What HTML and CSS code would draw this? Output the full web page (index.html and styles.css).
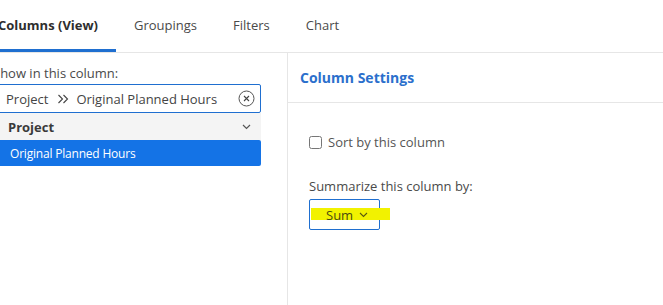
FILE: index.html
```html
<!DOCTYPE html>
<html lang="en">
<head>
  <meta charset="UTF-8">
  <title>Column Settings</title>
  <link rel="stylesheet" href="styles.css">
</head>
<body>
  <div class="page">
    <nav class="tabs">
      <div class="tab active">Columns (View)</div>
      <div class="tab">Groupings</div>
      <div class="tab">Filters</div>
      <div class="tab">Chart</div>
    </nav>

    <main class="content">
      <section class="left-panel">
        <div class="field-label">Show in this column:</div>
        <div class="picker">
          <span>Project</span>
          <svg class="sep" width="12" height="10" viewBox="0 0 12 10">
            <path d="M1.5 1 L5.5 5 L1.5 9 M6.5 1 L10.5 5 L6.5 9" fill="none" stroke="#444" stroke-width="1.1"/>
          </svg>
          <span>Original Planned Hours</span>
          <svg class="clear" width="17" height="17" viewBox="0 0 17 17">
            <circle cx="8.5" cy="8.5" r="7.5" fill="none" stroke="#555" stroke-width="1"/>
            <path d="M6 6 L11 11 M11 6 L6 11" stroke="#444" stroke-width="1.1"/>
          </svg>
        </div>
        <div class="group-row">
          <span>Project</span>
          <svg width="9" height="6" viewBox="0 0 9 6">
            <path d="M1 1 L4.5 4.5 L8 1" fill="none" stroke="#555" stroke-width="1.2"/>
          </svg>
        </div>
        <div class="option-row">Original Planned Hours</div>
      </section>

      <section class="right-panel">
        <h3 class="panel-title">Column Settings</h3>
        <div class="settings">
          <label class="check">
            <input type="checkbox">
            <span>Sort by this column</span>
          </label>
          <div class="field-label">Summarize this column by:</div>
          <div class="sum-select">
            <span class="highlight"></span>
            <span class="sum-text">Sum</span>
            <svg width="9" height="6" viewBox="0 0 9 6">
              <path d="M1 1 L4.5 4.5 L8 1" fill="none" stroke="#5a5a10" stroke-width="1.1"/>
            </svg>
          </div>
        </div>
      </section>
    </main>
  </div>
</body>
</html>
```

FILE: styles.css
```css
:root {
--blue: #1473e6;
--blue-line: #1f6fd0;
--title-blue: #2b6fcc;
--line: #e6e6e6;
--text: #454545;
}

* {
box-sizing: border-box;
}

body {
margin: 0;
font-family: "Open Sans", "Liberation Sans", sans-serif;
font-size: 13px;
color: var(--text);
background: #fff;
overflow: hidden;
height: 305px;
}

.page {
margin-left: -20px;
height: 100%;
display: flex;
flex-direction: column;
}

.tabs {
display: flex;
height: 53px;
border-bottom: 1px solid var(--line);
flex-shrink: 0;
}

.tab {
padding: 0 18px;
display: flex;
align-items: center;
font-size: 13px;
color: #4a4a4a;
border-bottom: 3px solid transparent;
padding-top: 1px;
}

.tab.active {
font-weight: 700;
color: #2e2e2e;
border-bottom-color: var(--blue-line);
}

.content {
display: flex;
flex: 1;
}

.left-panel {
width: 308px;
padding: 11px 26px 0 13px;
border-right: 1px solid var(--line);
}

.field-label {
line-height: 18px;
color: #4a4a4a;
margin-bottom: 2px;
}

.picker {
display: flex;
align-items: center;
height: 29px;
border: 1px solid var(--blue-line);
border-radius: 2px;
padding: 0 5px 0 12px;
color: #444;
}

.picker .sep {
margin: 0 7px 0 9px;
}

.picker .clear {
margin-left: auto;
}

.group-row {
display: flex;
align-items: center;
justify-content: space-between;
height: 27px;
background: #f4f4f4;
padding: 0 10px 0 15px;
font-weight: 700;
color: #3a3a3a;
}

.option-row {
height: 26px;
background: var(--blue);
color: #fff;
font-size: 12px;
letter-spacing: -0.2px;
display: flex;
align-items: center;
padding-left: 17px;
border-radius: 2px;
}

.right-panel {
flex: 1;
}

.panel-title {
margin: 0;
height: 50px;
display: flex;
align-items: center;
padding-left: 12px;
font-size: 14px;
font-weight: 700;
color: var(--title-blue);
border-bottom: 1px solid var(--line);
}

.settings {
padding: 30px 0 0 21px;
}

.check {
display: flex;
align-items: center;
gap: 6px;
color: #555;
margin-bottom: 26px;
}

.check input {
margin: 0;
width: 13px;
height: 13px;
}

.sum-select {
position: relative;
width: 71px;
height: 31px;
margin-top: 4px;
border: 1px solid var(--blue-line);
border-radius: 2px;
display: flex;
align-items: center;
padding-left: 16px;
gap: 6px;
color: #4b4b10;
}

.sum-select .highlight {
position: absolute;
left: 1px;
top: 8px;
width: 79px;
height: 12px;
background: #f2f200;
}

.sum-text,
.sum-select svg {
position: relative;
}
```
